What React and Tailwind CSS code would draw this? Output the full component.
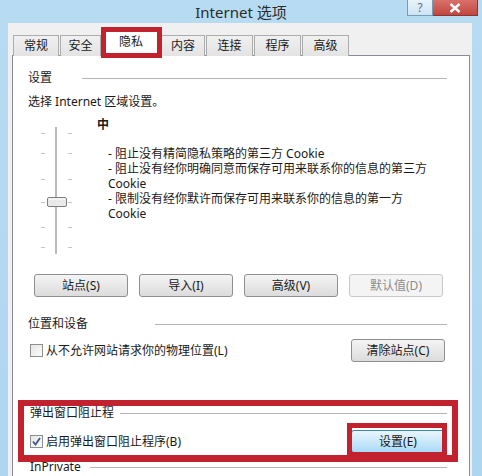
import React from 'react';

const tabs = [
  { label: '常规', w: 'w-[46px]' },
  { label: '安全', w: 'w-[41px]' },
  { label: '隐私', w: 'w-[58px]', active: true },
  { label: '内容', w: 'w-[44px]' },
  { label: '连接', w: 'w-[47px]' },
  { label: '程序', w: 'w-[47px]' },
  { label: '高级', w: 'w-[47px]' },
];

// red annotation frame drawn over a control
const RedFrame = ({ className }) => (
  <div className={`absolute border-[#c1222e] pointer-events-none ${className}`} />
);

const Button = ({ children, disabled, className = '' }) => (
  <button
    className={`h-[23px] w-[94px] rounded-[3px] border text-[12px] leading-none ${
      disabled
        ? 'border-[#c9c9c9] bg-[#f4f4f4] text-[#8d8d8d]'
        : 'border-[#8f8f8f] bg-gradient-to-b from-[#f4f4f4] to-[#dcdcdc] text-[#1a1a1a]'
    } ${className}`}
  >
    {children}
  </button>
);

const GroupHeader = ({ label, labelW, className = '' }) => (
  <div className={`flex items-center h-[16px] ${className}`}>
    <span className={`${labelW} shrink-0 text-[12px] leading-[16px]`}>{label}</span>
    <div className="flex-1 h-px bg-[#b4b4b4]" />
  </div>
);

const Checkbox = ({ checked }) => (
  <span className="w-[13px] h-[13px] border border-[#8e8f8f] bg-gradient-to-br from-[#e6e6e6] to-[#fbfbfb] flex items-center justify-center shrink-0">
    {checked && (
      <svg width="11" height="11" viewBox="0 0 11 11">
        <path d="M2 5.5 L4.5 8.5 L9 2" fill="none" stroke="#3a5a8c" strokeWidth="1.8" />
      </svg>
    )}
  </span>
);

const Slider = () => {
  const ticks = [8, 28, 54, 77, 102, 122];
  return (
    <svg width="40" height="132" viewBox="0 0 40 132" className="shrink-0">
      <rect x="19" y="2" width="2" height="127" fill="#d6d6d6" />
      <line x1="20" y1="2" x2="20" y2="129" stroke="#9a9a9a" strokeWidth="1" />
      {ticks.map((y) => (
        <g key={y} stroke="#c4c4c4" strokeWidth="1">
          <line x1="5" y1={y + 0.5} x2="9" y2={y + 0.5} />
          <line x1="32" y1={y + 0.5} x2="36" y2={y + 0.5} />
        </g>
      ))}
      <rect x="11.5" y="72.5" width="19" height="9" rx="1.5" fill="#e9e9e9" stroke="#7f7f7f" />
      <line x1="12.5" y1="74" x2="29.5" y2="74" stroke="#ffffff" />
    </svg>
  );
};

export default function App() {
  return (
    <div
      className="w-[482px] h-[476px] overflow-hidden bg-gradient-to-b from-[#b7dcf2] to-[#aed6ef] text-[#1a1a1a]"
      style={{ fontFamily: '"Noto Sans", "Noto Sans CJK SC", sans-serif' }}
    >
      {/* Title bar */}
      <div className="h-[23px] grid grid-cols-[1fr_auto_1fr]">
        <div />
        <div className="text-[15px] leading-[23px] text-[#2b2b2b] pt-[1px]">Internet 选项</div>
        <div className="flex justify-end items-start pr-[4px]">
          <div className="w-[26px] h-[16px] border border-t-0 border-[#7a9bb5] bg-gradient-to-b from-[#e8f3fa] to-[#cde4f3] flex items-center justify-center text-[12px] leading-none text-[#6b6b6b]">
            ?
          </div>
          <div className="w-[45px] h-[16px] border border-t-0 border-l-0 border-[#8a3434] bg-gradient-to-b from-[#d9706b] to-[#c24640] flex items-center justify-center">
            <svg width="12" height="10" viewBox="0 0 12 10">
              <path d="M1.5 1 L10.5 9 M10.5 1 L1.5 9" stroke="#ffffff" strokeWidth="2.4" />
            </svg>
          </div>
        </div>
      </div>

      {/* Dialog body */}
      <div className="ml-[8px] w-[464px] h-[453px] bg-[#f0f0f0] pl-[4px] pt-[12px]">
        {/* Tabs */}
        <div className="flex items-end h-[21px] pl-[1px] gap-[1px] text-[12px]">
          {tabs.map((t) =>
            t.active ? (
              <div key={t.label} className={`relative ${t.w} h-[28px] -mb-px z-10`}>
                <div className="h-full bg-white border border-b-0 border-[#898c95] flex justify-center pt-[4px] leading-[16px]">
                  {t.label}
                </div>
                <RedFrame className="-left-[1px] -right-[2px] -top-[2px] -bottom-[1px] border-[5px]" />
              </div>
            ) : (
              <div
                key={t.label}
                className={`${t.w} h-[21px] border border-b-0 border-[#acacac] bg-gradient-to-b from-[#f0f0f0] to-[#e3e3e3] flex justify-center pt-[1px] leading-[18px]`}
              >
                {t.label}
              </div>
            )
          )}
        </div>

        {/* Tab panel */}
        <div className="w-[458px] h-[430px] -mt-px bg-white border border-[#898c95] pl-[15px] pr-[22px] pt-[14px] text-[12px] leading-[16px]">
          <GroupHeader label="设置" labelW="w-[54px]" />
          <div className="mt-[8px]">选择 Internet 区域设置。</div>

          <div className="mt-[7px] flex">
            <div className="ml-[8px] mt-[8px]">
              <Slider />
            </div>
            <div className="ml-[21px] leading-[15px]">
              <div className="font-bold">中</div>
              <div className="mt-[14px] pl-[11px]">
                <div>- 阻止没有精简隐私策略的第三方 Cookie</div>
                <div>- 阻止没有经你明确同意而保存可用来联系你的信息的第三方</div>
                <div>Cookie</div>
                <div>- 限制没有经你默许而保存可用来联系你的信息的第一方</div>
                <div>Cookie</div>
              </div>
            </div>
          </div>

          <div className="mt-[17px] ml-[6px] flex gap-[11px]">
            <Button>站点(S)</Button>
            <Button>导入(I)</Button>
            <Button>高级(V)</Button>
            <Button disabled>默认值(D)</Button>
          </div>

          <GroupHeader label="位置和设备" labelW="w-[127px]" className="mt-[19px]" />
          <div className="mt-[7px] flex items-center justify-between h-[23px]">
            <label className="flex items-center gap-[3px] pl-[2px]">
              <Checkbox />
              <span>从不允许网站请求你的物理位置(L)</span>
            </label>
            <Button className="mr-[2px]">清除站点(C)</Button>
          </div>

          {/* Pop-up blocker */}
          <div className="relative mt-[43px]">
            <GroupHeader label="弹出窗口阻止程" labelW="w-[90px]" className="pl-[2px]" />
            <div className="mt-[9px] flex items-center justify-between h-[23px]">
              <label className="flex items-center gap-[3px] pl-[2px]">
                <Checkbox checked />
                <span>启用弹出窗口阻止程序(B)</span>
              </label>
              <div className="relative mr-[2px]">
                <button className="h-[23px] w-[94px] rounded-[3px] border border-[#3c7fb1] bg-gradient-to-b from-[#eaf6fd] to-[#a9daf6] text-[12px] leading-none">
                  设置(E)
                </button>
                <RedFrame className="-left-[4px] -right-[2px] -top-[7px] -bottom-[4px] border-[5px]" />
              </div>
            </div>
            <RedFrame className="-left-[10px] -right-[11px] -top-[5px] -bottom-[9px] border-[6px] border-b-[7px]" />
          </div>

          <GroupHeader label="InPrivate" labelW="w-[60px]" className="mt-[6px] pl-[2px]" />
        </div>
      </div>
    </div>
  );
}
